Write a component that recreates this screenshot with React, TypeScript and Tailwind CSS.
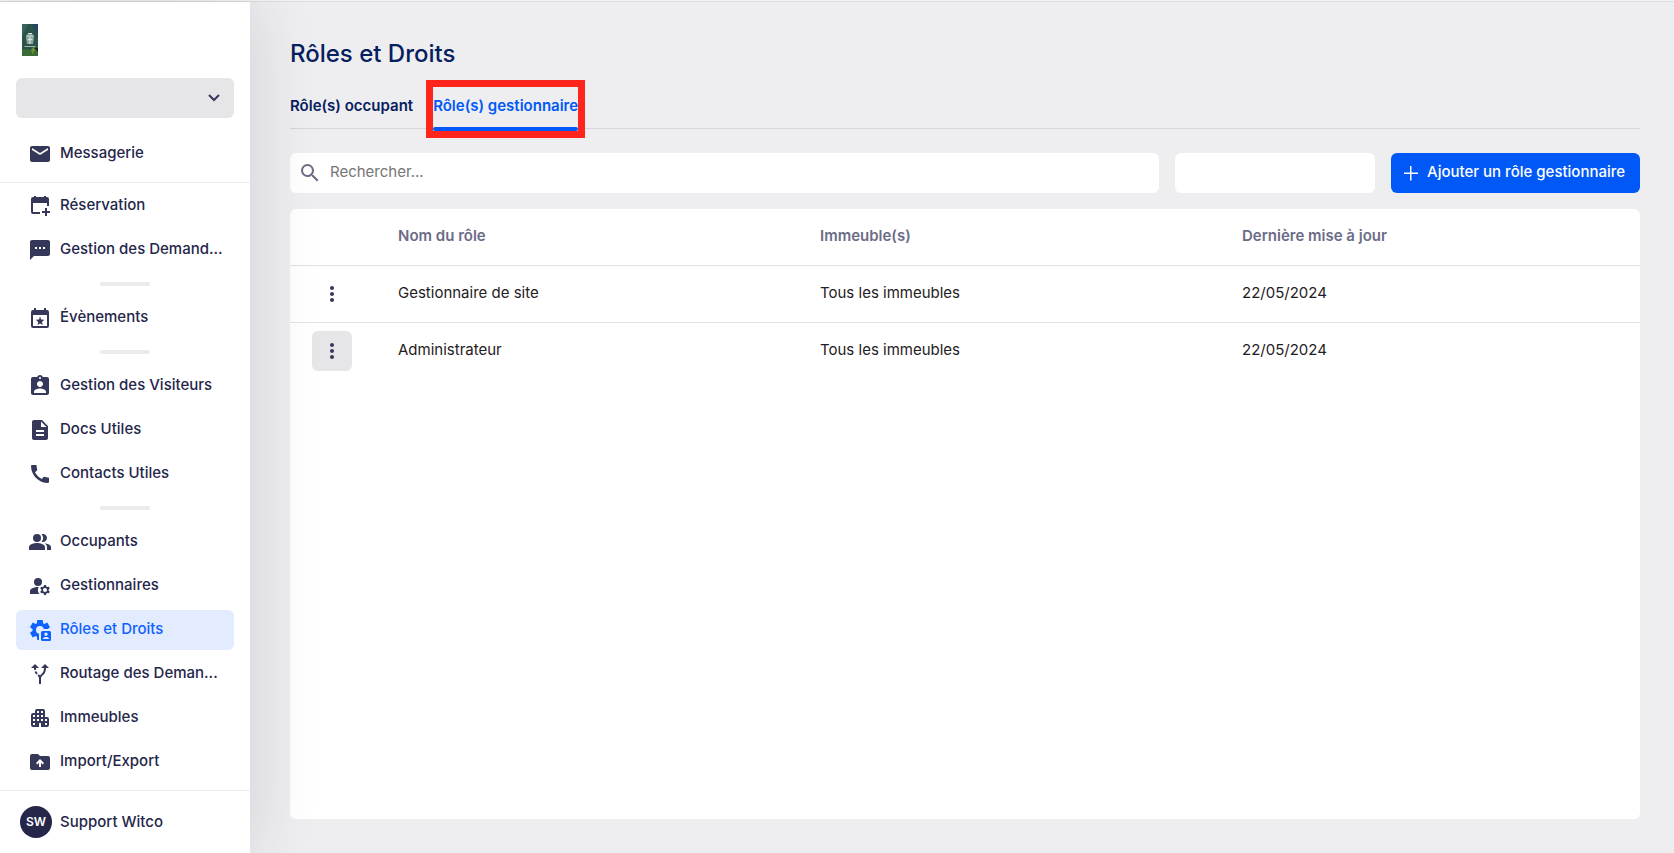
import type { ReactNode } from 'react';
import {
  MdAltRoute,
  MdAssignmentInd,
  MdCall,
  MdDescription,
  MdEmail,
  MdManageAccounts,
  MdMoreVert,
  MdPeopleAlt,
  MdSearch,
  MdTextsms,
} from 'react-icons/md';

interface NavItem {
  label: string;
  icon: ReactNode;
  title?: string;
  active?: boolean;
}

interface Role {
  id: number;
  nom: string;
  immeubles: string;
  date: string;
  hovered?: boolean;
}

function Svg({ children }: { children: ReactNode }) {
  return (
    <svg viewBox="0 0 24 24" width="24" height="24" fill="currentColor">
      {children}
    </svg>
  );
}

function CalendarAddIcon() {
  return (
    <Svg>
      <path d="M5 20a2 2 0 0 1-2-2V5a2 2 0 0 1 2-2h1V2h2v1h8V2h2v1h1a2 2 0 0 1 2 2v7h-2V9H5v9h7v2z" />
      <path d="M17 22v-3h-3v-2h3v-3h2v3h3v2h-3v3z" />
    </Svg>
  );
}

function EventIcon() {
  return (
    <Svg>
      <path d="M19 4h-1V2h-2v2H8V2H6v2H5a2 2 0 0 0-2 2v14a2 2 0 0 0 2 2h14a2 2 0 0 0 2-2V6a2 2 0 0 0-2-2zm0 16H5V9h14v11z" />
      <path d="M9.500 19l.7-3.100-2.400-2.100 3.200-.3L12 10.500l1.200 3 3.200.3-2.400 2.100.7 3.100-2.700-1.600z" />
    </Svg>
  );
}

function RolesIcon() {
  return (
    <Svg>
      <path d="M9.300 22l-.4-3.200a4 4 0 0 1-1.200-.7l-3 1.300L2 14.700l2.600-2a5 5 0 0 1 0-1.400L2 9.300l2.700-4.700 3 1.300q.6-.4 1.200-.7L9.300 2h5.400l.4 3.200q.6.300 1.200.7l3-1.300L22 9.300l-2.200 1.700h-4A4 4 0 1 0 11 15.800V22z" />
      <path
        fillRule="evenodd"
        d="M14.500 13h7a1.500 1.500 0 0 1 1.500 1.500v7a1.500 1.500 0 0 1-1.500 1.500h-7a1.500 1.500 0 0 1-1.500-1.500v-7a1.500 1.500 0 0 1 1.500-1.500zM18 14.500a1.700 1.700 0 1 0 0 3.400 1.700 1.700 0 0 0 0-3.400zM14.800 21h6.400c-.4-1.400-1.600-2-3.200-2s-2.800.6-3.200 2z"
      />
    </Svg>
  );
}

function BuildingIcon() {
  return (
    <Svg>
      <path
        fillRule="evenodd"
        d="M5 21a2 2 0 0 1-2-2V9a2 2 0 0 1 2-2h2V5a2 2 0 0 1 2-2h6a2 2 0 0 1 2 2v6h2a2 2 0 0 1 2 2v6a2 2 0 0 1-2 2h-6v-4h-2v4zM5 19h2v-2H5zm0-4h2v-2H5zm0-4h2V9H5zm4 4h2v-2H9zm0-4h2V9H9zm0-4h2V5H9zm4 8h2v-2h-2zm0-4h2V9h-2zm0-4h2V5h-2zm4 12h2v-2h-2zm0-4h2v-2h-2z"
      />
    </Svg>
  );
}

function FolderUploadIcon() {
  return (
    <Svg>
      <path
        fillRule="evenodd"
        d="M4 20a2 2 0 0 1-2-2V6a2 2 0 0 1 2-2h6l2 2h8a2 2 0 0 1 2 2v10a2 2 0 0 1-2 2zM11 17h2v-4.200l1.600 1.600L16 13l-4-4-4 4 1.400 1.400 1.600-1.600z"
      />
    </Svg>
  );
}

function PlusIcon() {
  return (
    <Svg>
      <path d="M11 5h1.500v6.500H19V13h-6.500v6.500H11V13H5v-1.500h6z" />
    </Svg>
  );
}

const NAV_GROUPS: NavItem[][] = [
  [
    { label: 'Réservation', icon: <CalendarAddIcon /> },
    {
      label: 'Gestion des Demand...',
      title: 'Gestion des Demandes',
      icon: <MdTextsms size={24} />,
    },
  ],
  [{ label: 'Évènements', icon: <EventIcon /> }],
  [
    { label: 'Gestion des Visiteurs', icon: <MdAssignmentInd size={24} /> },
    { label: 'Docs Utiles', icon: <MdDescription size={24} /> },
    { label: 'Contacts Utiles', icon: <MdCall size={24} /> },
  ],
  [
    { label: 'Occupants', icon: <MdPeopleAlt size={24} /> },
    { label: 'Gestionnaires', icon: <MdManageAccounts size={24} /> },
    { label: 'Rôles et Droits', icon: <RolesIcon />, active: true },
    {
      label: 'Routage des Deman...',
      title: 'Routage des Demandes',
      icon: <MdAltRoute size={24} />,
    },
    { label: 'Immeubles', icon: <BuildingIcon /> },
    { label: 'Import/Export', icon: <FolderUploadIcon /> },
  ],
];

const ROLES: Role[] = [
  {
    id: 1,
    nom: 'Gestionnaire de site',
    immeubles: 'Tous les immeubles',
    date: '22/05/2024',
  },
  {
    id: 2,
    nom: 'Administrateur',
    immeubles: 'Tous les immeubles',
    date: '22/05/2024',
    hovered: true,
  },
];

function NavLink({ label, icon, title, active }: NavItem) {
  return (
    <a
      href="#"
      title={title}
      aria-current={active ? 'page' : undefined}
      className={`flex h-10 items-center gap-2 rounded-md px-3 ${
        active ? 'bg-[#e3ecff] text-[#0f62fe]' : 'text-[#36385a]'
      }`}
    >
      <span className="shrink-0">{icon}</span>
      <span
        className={`whitespace-nowrap pb-[2px] font-medium ${
          active ? '' : 'text-[#25264a]'
        }`}
      >
        {label}
      </span>
    </a>
  );
}

function Logo() {
  return (
    <svg viewBox="0 0 16 32" width="16" height="32" aria-label="Logo">
      <rect width="16" height="32" fill="#2c5349" />
      <path d="M0 0h6L0 12z" fill="#35645f" />
      <path d="M10 0h6v14z" fill="#27465f" />
      <path d="M0 32V25l9 1 7-3v9z" fill="#3a6a35" />
      <path d="M9 26l3-4 1 3 3 1-4 1-1 4z" fill="#6a8f35" />
      <path d="M12 24h4v4z" fill="#14251f" />
      <path d="M4.500 11q3.500-3 7 0l.5 3-1 6h-6l-1-6z" fill="#86a29b" />
      <path
        d="M6 9.500h4M4.500 12h7M8 13v7M5.500 16l2.500-1 2.500 1"
        fill="none"
        stroke="#d6e2de"
        strokeWidth="1.200"
      />
      <path d="M2.500 22.500h11" stroke="#9db3a9" />
    </svg>
  );
}

function Sidebar() {
  return (
    <aside className="relative z-10 flex w-[250px] shrink-0 flex-col bg-white shadow-[0_0_64px_rgba(37,38,74,0.15)]">
      <div className="px-4 pb-2">
        <div className="mt-[22px] mb-[22px] pl-[6px]">
          <Logo />
        </div>
        <div className="mb-4 grid items-center">
          <select
            aria-label="Site"
            className="col-start-1 row-start-1 h-10 w-full appearance-none rounded-md bg-[#e6e6e8] px-3"
          />
          <svg
            viewBox="0 0 12 8"
            width="12"
            height="8"
            className="pointer-events-none col-start-1 row-start-1 mr-[14px] justify-self-end"
          >
            <path
              d="M1 1l5 5 5-5"
              fill="none"
              stroke="#36385a"
              strokeWidth="2"
            />
          </svg>
        </div>
        <NavLink label="Messagerie" icon={<MdEmail size={24} />} />
      </div>
      <nav className="flex flex-1 flex-col border-y border-[#ebebee] px-4 pt-[3px]">
        {NAV_GROUPS.map((group, i) => (
          <div key={i}>
            {i > 0 && (
              <div className="mx-auto my-3 h-1 w-[50px] rounded-full bg-[#ebebee]" />
            )}
            <div className="flex flex-col gap-1">
              {group.map((item) => (
                <NavLink key={item.label} {...item} />
              ))}
            </div>
          </div>
        ))}
      </nav>
      <div className="flex h-[62px] items-center gap-2 px-5">
        <span className="flex size-8 items-center justify-center rounded-full bg-[#25264a] text-xs font-semibold text-white">
          SW
        </span>
        <span className="font-medium text-[#25264a]">Support Witco</span>
      </div>
    </aside>
  );
}

function RolesTable() {
  return (
    <div className="flex-1 rounded-md bg-white">
      <table className="w-full table-fixed text-left">
        <colgroup>
          <col className="w-[84px]" />
          <col />
          <col />
          <col />
        </colgroup>
        <thead>
          <tr className="h-14 border-b border-[#e3e3e6] text-[#6b6c86]">
            <th aria-label="Actions" />
            <th className="px-6 pb-[2px] font-semibold">Nom du rôle</th>
            <th className="px-6 pb-[2px] font-semibold">Immeuble(s)</th>
            <th className="px-6 pb-[2px] font-semibold">
              Dernière mise à jour
            </th>
          </tr>
        </thead>
        <tbody className="text-[#1f2023]">
          {ROLES.map((role) => (
            <tr
              key={role.id}
              className="h-[57px] border-b border-[#e3e3e6] last:border-b-0"
            >
              <td className="px-[22px]">
                <button
                  type="button"
                  aria-label={`Actions ${role.nom}`}
                  className={`flex size-10 items-center justify-center rounded-md text-[#36385a] ${
                    role.hovered ? 'bg-[#e6e6e8]' : ''
                  }`}
                >
                  <MdMoreVert size={24} />
                </button>
              </td>
              <td className="px-6 pb-[2px]">{role.nom}</td>
              <td className="px-6 pb-[2px]">{role.immeubles}</td>
              <td className="px-6 pb-[2px]">{role.date}</td>
            </tr>
          ))}
        </tbody>
      </table>
    </div>
  );
}

export default function App() {
  return (
    <div className="flex min-h-screen flex-col bg-[#eeeef0] font-['Inter','Liberation_Sans',sans-serif] text-[15px] leading-6">
      <div className="h-[2px] border-b border-[#dcdcde] bg-[#f4f4f5]" />
      <div className="flex flex-1">
        <Sidebar />
        <main className="flex min-w-0 flex-1 flex-col pt-9 pr-[34px] pb-[34px] pl-10">
          <h1 className="text-2xl font-medium text-[#05205e]">
            Rôles et Droits
          </h1>
          <div
            role="tablist"
            className="mt-4 mb-6 flex h-[43px] gap-5 border-b border-[#d5d5dc] font-semibold"
          >
            <button
              type="button"
              role="tab"
              className="pb-[2px] text-[#05205e]"
            >
              Rôle(s) occupant
            </button>
            <div className="relative flex">
              <button
                type="button"
                role="tab"
                aria-selected="true"
                className="pb-[2px] text-[#0059f7]"
              >
                Rôle(s) gestionnaire
              </button>
              <span className="absolute inset-x-0 -bottom-[3px] h-1 rounded-full bg-[#0059f7]" />
              <span className="pointer-events-none absolute -inset-x-[7px] -top-[6px] -bottom-[10px] border-[7px] border-[#ff241c]" />
            </div>
          </div>
          <div className="mb-4 flex gap-4">
            <div className="flex h-10 flex-1 items-center gap-2 rounded-md bg-white px-2">
              <MdSearch size={24} className="shrink-0 text-[#6b6c86]" />
              <input
                type="text"
                aria-label="Rechercher"
                placeholder="Rechercher..."
                className="w-full pb-[2px] outline-none placeholder:text-[#757575]"
              />
            </div>
            <select
              aria-label="Immeuble"
              className="h-10 w-[200px] appearance-none rounded-md bg-white px-3"
            />
            <button
              type="button"
              className="flex h-10 w-[249px] items-center gap-1 rounded-md bg-[#0059f7] pl-2 font-medium text-white"
            >
              <PlusIcon />
              <span className="pb-[2px]">Ajouter un rôle gestionnaire</span>
            </button>
          </div>
          <RolesTable />
        </main>
      </div>
    </div>
  );
}
